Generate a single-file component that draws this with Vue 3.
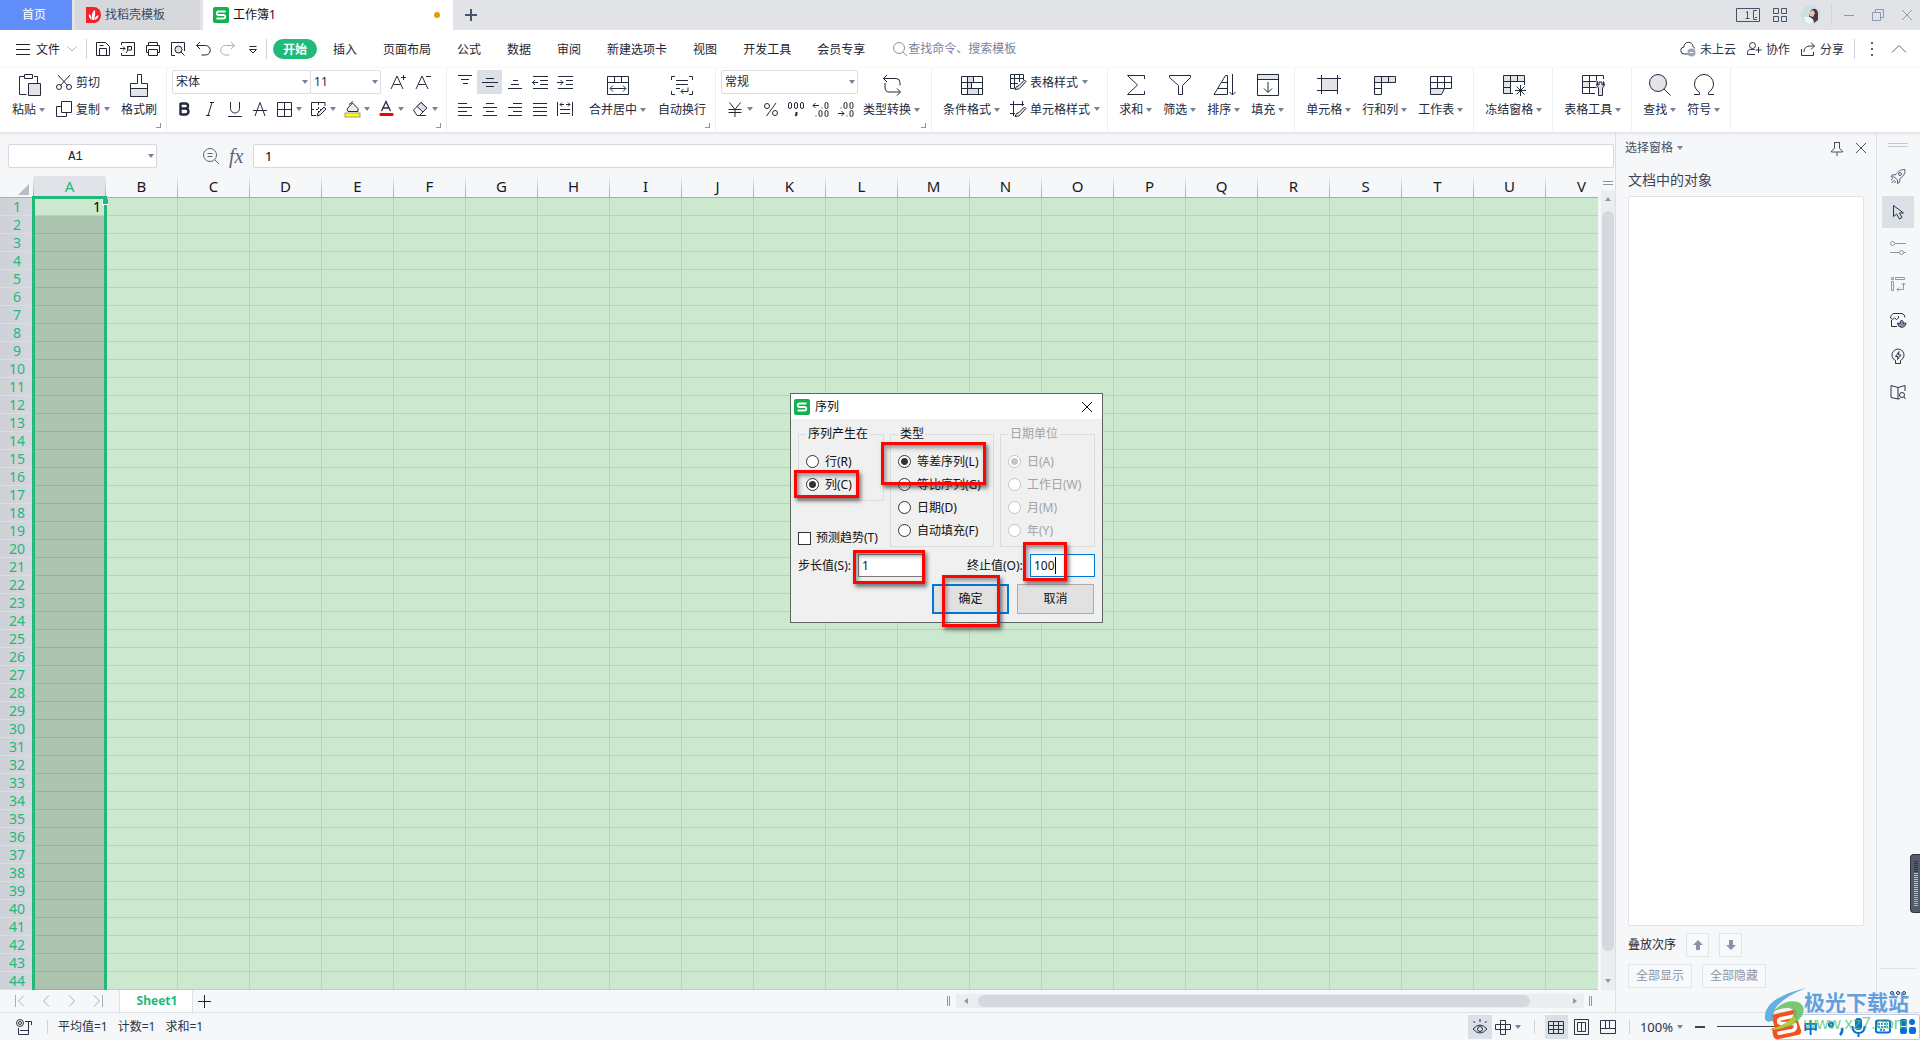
<script setup>
import { h } from 'vue'

const shapes = {
  menu: '<path d="M1 3.500h14M1 8.500h14M1 13.500h14"/>',
  chevDown: '<path d="M3.500 5.500l4.500 4.500 4.500-4.500"/>',
  chevUp: '<path d="M1 11.500l7-7 7 7"/>',
  save: '<path d="M1.500 1.500h9l4 4v9h-13zM4.500 14.500v-7h7v7M4.500 4.500h4"/>',
  exportPdf: '<path d="M1.500 4V1.500h13v13h-13V12M0 7.500h5M3 5.500l2 2-2 2M7.500 5.500h4v3.500h-4zM8 5c0 4-1 6-2 7"/>',
  print: '<path d="M3.500 4.500v-3h9v3M3.500 11.500h-2v-7h13v7h-2M3.500 8.500h9v6h-9z"/>',
  preview: '<path d="M5 14.500H1.500v-13h13V10"/><circle cx="8.500" cy="8.500" r="3.500" fill="#e3e4e8"/><path d="M11 11l3.500 3.500"/>',
  undo: '<path d="M1.500 4.500h9a4 4 0 0 1 0 9.500h-4M5 1L1.500 4.500 5 8"/>',
  redo: '<path d="M14.500 4.500h-9a4 4 0 0 0 0 9.500h4M11 1l3.500 3.500L11 8"/>',
  more: '<path d="M4.500 5.500h7M4.500 8.500h7l-3.500 3.500z"/>',
  search: '<circle cx="7" cy="7" r="5.500"/><path d="M11 11l4 4"/>',
  zoomOut: '<circle cx="7" cy="7" r="6.500"/><path d="M11.500 11.500l4.500 4.500M4.500 5.500h5M4.500 8.500h5"/>',
  cloud: '<path d="M8 13H4.500a3.500 3.500 0 0 1-.500-7 4.500 4.500 0 0 1 9-.500c1 .500 1.500 1 1.500 2"/><circle cx="11.500" cy="11.500" r="4" fill="#9aa3b6" stroke="none"/><path d="M9.500 11.500h4" stroke="#fff"/>',
  team: '<circle cx="6.500" cy="4.500" r="3"/><path d="M9 13.500H1.500v-2c0-2 1-3 3-3h4M12.500 6v6M9.500 9h6"/>',
  share: '<path d="M1.500 8v6.500h12V11M4 11c0-4 2-6 7-6h3M11 1.500L14.500 5 11 8.500"/>',
  paste: '<path d="M7 3.500H2.500v18h7M17 3.500h3.500V10M7.500 1.500h8v4h-8z"/><path fill="#e3e4e8" d="M11.500 10.500h12v12h-12z"/>',
  cut: '<path d="M2 1l10 11M14 1L4 12"/><circle cx="3" cy="13" r="2.500"/><circle cx="13" cy="13" r="2.500"/>',
  copy: '<path d="M5 5.500H.500v10h10V12M5.500 .500h10v11h-10z"/>',
  brush: '<path d="M10.500 1.500h4v9h6v13h-17v-13h7z"/><path d="M3.500 15.500h17v8h-17z" fill="#e3e4e8"/>',
  fontUp: '<path d="M1 15L7 2l6 13M3.500 10.500h7M11 3.500h5M13.500 1v5"/>',
  fontDown: '<path d="M1 15L7 2l6 13M3.500 10.500h7M11 2.500h5"/>',
  bold: '<path d="M3.500 2v12M3.500 2.500h5a2.500 2.500 0 0 1 0 5h-5M8.500 7.500a3 3 0 0 1 0 6h-5" stroke-width="2.400"/>',
  italic: '<path d="M8 1.500h4M4 14.500h4M10 1.500l-4 13"/>',
  underline: '<path d="M3.500 1v6.500a4.500 4.500 0 0 0 9 0V1M1 15.500h14"/>',
  strike: '<path d="M3 15L8 1.500 13 15M1 9.500h14"/>',
  border: '<path d="M1.500 1.500h14v14h-14zM8.500 1.500v14M1.500 8.500h14"/>',
  borderDraw: '<path d="M15 5V1.500H1.500v13H6"/><path d="M2 8.500h9M8.500 2v9" stroke-dasharray="2 2"/><path fill="#e3e4e8" d="M7 15l1-3 6-6 2 2-6 6z"/>',
  fill: '<path d="M3 8l5.500-6L14 7.500v3H4zM5 3.500l4-3" fill="#eceef0"/><rect x="1" y="12" width="15" height="4" fill="#ff0" stroke="#999"/>',
  fontColor: '<path d="M3.500 10L8 .500 12.500 10M5 7h6" stroke-width="1.300"/><rect x="1.500" y="12" width="14" height="3" rx="1" fill="#f00" stroke="none"/>',
  eraser: '<path d="M1.500 9L9 1.500l6 5.500-7.500 7.500H5z" fill="#fff"/><path d="M5 5.500L9 1.500l6 5.500-4 4z" fill="#dcdfe5"/><path d="M5 14.500h9"/>',
  alTop: '<path d="M1 1.500h14M4 5.500h8M6 9.500h5"/>',
  alMid: '<path d="M4 4.500h8M0 8.500h16M4 12.500h8"/>',
  alBot: '<path d="M6 6.500h5M4 10.500h8M1 14.500h14"/>',
  outdent: '<path d="M1 2.500h15M8 6.500h8M8 10.500h8M1 14.500h15M0 8.500h6M3 6L.500 8.500 3 11"/>',
  indent: '<path d="M1 2.500h15M9 6.500h7M9 10.500h7M1 14.500h15M0 8.500h6M3.500 6L6 8.500 3.500 11"/>',
  left: '<path d="M1 2.500h9M1 6.500h14M1 10.500h9M1 14.500h14"/>',
  center: '<path d="M4 2.500h8M1 6.500h14M4 10.500h8M1 14.500h14"/>',
  right: '<path d="M6 2.500h9M1 6.500h14M6 10.500h9M1 14.500h14"/>',
  justify: '<path d="M1 2.500h14M1 6.500h14M1 10.500h14M1 14.500h14"/>',
  distribute: '<path d="M.500 1v14M15.500 1v14M3 8.500h10M3 12.500h10M3 3.500h4M9 3.500h4M5 1.500L3 3.500l2 2M11 1.500l2 2-2 2"/>',
  merge: '<path d="M1.500 3.500h21v18h-21zM1.500 9.500h21M8.500 3.500v6M15.500 3.500v6M4.500 15.500h15M7 12.500l-3 3 3 3M17 12.500l3 3-3 3"/>',
  wrap: '<path d="M1.500 7V3.500H5M19 3.500h3.500V7M1.500 18v3.500H5M19 21.500h3.500V18M6 7.500h12M6 11.500h12M6 15.500h4M18 14.500v4h-7M13.500 16l-2.500 2.500 2.500 2.500"/>',
  yen: '<path d="M2.500 1.500L8 8.500l5.500-7M1.500 8.500h13M1.500 11.500h13M8 8.500V16"/>',
  percent: '<circle cx="4" cy="5" r="2.500"/><circle cx="12" cy="12" r="2.500"/><path d="M13 2L3.500 15"/>',
  thousand: '<rect x=".500" y="1.500" width="3" height="6" rx="1.500"/><rect x="6.500" y="1.500" width="3" height="6" rx="1.500"/><rect x="12.500" y="1.500" width="3" height="6" rx="1.500"/><path d="M8.500 11v2l-1 2" stroke-width="2"/>',
  decLess: '<path d="M0 4.500h6M2.500 2L0 4.500 2.500 7M9 6.500v1M3 14.500v1"/><rect x="12" y="1.500" width="3" height="6" rx="1.500"/><rect x="6" y="9.500" width="3" height="6" rx="1.500"/><rect x="12" y="9.500" width="3" height="6" rx="1.500"/>',
  decMore: '<path d="M0 12.500h6M3.500 10L6 12.500 3.500 15M9 14.500v1M3 6.500v1"/><rect x="12" y="9.500" width="3" height="6" rx="1.500"/><rect x="6" y="1.500" width="3" height="6" rx="1.500"/><rect x="12" y="1.500" width="3" height="6" rx="1.500"/>',
  convert: '<path d="M7 2L3.500 5.500 7 9M3.500 5.500H16q4 0 4 4v3M5 10v4q0 5 4 5h11M17 15.500l3.500 3.500-3.500 3.500"/>',
  condFormat: '<path fill="#dcdfe5" stroke="none" d="M7 4h6v6H7zM7 10h5v6H7zM7 16h12v6H7z"/><path d="M1.500 3.500h21v18h-21zM1.500 9.500h21M1.500 15.500h21M7.500 3.500v18M13.500 3.500v6M11.500 9.500v6M18.500 15.500v6"/>',
  tableStyle: '<path d="M4 14.500H.500V.500h13V6M.500 4.500h13M.500 9.500H8M4.500 .500v14M9.500 .500V8"/><path fill="#e3e4e8" d="M5 15.500q1-4 4-4l5.500-5.500 1.500 1.500-5.500 6q-1 2-5.500 2z"/>',
  cellStyle: '<path d="M0 3.500h14M3.500 0v15M0 12.500h5M12.500 0v5"/><path fill="#e3e4e8" d="M5 15.500q1-4 4-4l5.500-5.500 1.500 1.500-5.500 6q-1 2-5.500 2z"/>',
  sum: '<path d="M20.500 6V2.500h-17L13.500 12l-10 9.500h17V18"/>',
  filter: '<path d="M1.500 2.500h21v2l-8 8v9h-4v-9l-9-8z"/>',
  sort: '<path d="M15.500 2.500h-2l-11.500 19h13.500zM10 9.500h5M6 15.500h9M20.500 1v21M17.500 19l3 3 3-3"/>',
  down: '<path fill="#e3e4e8" d="M1.500 1.500h21v5h-21z"/><path d="M1.500 1.500h21v21h-21zM12 9v10M8 15.500l4 4 4-4"/>',
  cell: '<path fill="#e3e4e8" d="M4.500 5.500h16v12h-16z"/><path d="M0 5.500h24M0 17.500h19M4.500 2v19M20.500 2v14M20.500 17v4"/>',
  rowCol: '<path fill="#e3e4e8" d="M1.500 3.500h21v6h-21z"/><path d="M8.500 3.500v18h-7v-18M15.500 3.500v6M1.500 15.500h7"/>',
  sheet: '<path fill="#e3e4e8" d="M1.500 15.500h14l-3 6h-11z"/><path d="M1.500 3.500h21v12h-21zM1.500 9.500h21M8.500 3.500v12M15.500 3.500v12"/>',
  freeze: '<path fill="#e3e4e8" stroke="none" d="M1 2h22v6H8v13H1z"/><path d="M11 20.500H1.500v-18h21V12M1.500 8.500h21M1.500 14.500h7M8.500 2.500v18M15.500 2.500v6M18.500 12v11M13 17.500h11M14.500 13.500l8 8M22.500 13.500l-8 8"/>',
  tools: '<path fill="#e3e4e8" stroke="none" d="M1 9h7v6H1z"/><path d="M14 20.500H1.500v-18h21V6M1.500 8.500h14M1.500 14.500h14M8.500 2.500v18M15.500 2.500v5"/><path fill="#e3e4e8" d="M16.500 8.500q-2.500 4 1 6.500v7.500h4V15q3.500-2.500 1-6.500v3.500h-1.500V9h-3v3h-1.500z"/>',
  find: '<circle cx="10" cy="10" r="8.500" fill="#e3e4e8"/><path d="M16 16l6.500 6.500"/>',
  symbol: '<path d="M2 21.500h5.500v-2C4 17 2.500 14 2.500 11a9.500 9.500 0 0 1 19 0c0 3-1.500 6-5 8.500v2H22"/>',
  plus: '<path d="M8.500 2v13M2 8.500h13"/>',
  first: '<path d="M3.500 2v12M12 2.500L6.500 8l5.500 5.500"/>',
  prev: '<path d="M11 2.500L5.500 8l5.500 5.500"/>',
  next: '<path d="M5 2.500L10.500 8 5 13.500"/>',
  last: '<path d="M12.500 2v12M4 2.500L9.500 8 4 13.500"/>',
  macro: '<circle cx="4" cy="4" r="3.500"/><circle cx="4" cy="4" r="1.500"/><path d="M9 2.500h6.500V6M12.500 3v9M2.500 9v6.500h10v-4H4"/>',
  eye: '<path d="M1 10q7-8 14 0-7 8-14 0zM3 4L1.500 2M8 3V0M13 4l1.500-2"/><circle cx="8" cy="10" r="2.500"/>',
  cross: '<path d="M5.500 1.500h5v4h5v5h-5v5h-5v-5h-5v-5h5zM5.500 5.500h5v5h-5z"/>',
  gridView: '<path d="M.500 2.500h15v12h-15zM.500 6.500h15M.500 10.500h15M5.500 2.500v12M10.500 2.500v12"/>',
  pageView: '<path d="M.500 .500h14v15h-14zM3.500 3.500h4v9h-4zM7.500 3.500h4v9h-4z"/>',
  breakView: '<path d="M.500 1.500h15v13h-15zM.500 9.500h9M5.500 1.500v8M9.500 1.500v8h6"/>',
  pin: '<path d="M5 2.500h6M5.500 2.500v6l-3 2.500v1h11v-1l-3-2.500v-6M8 12v4"/>',
  close: '<path d="M3 3l10 10M13 3L3 13"/>',
  up: '<path fill="#8a93a8" stroke="none" d="M8 3l5 5H10v5H6V8H3z"/>',
  dn: '<path fill="#8a93a8" stroke="none" d="M8 13l5-5H10V3H6v5H3z"/>',
  rocket: '<path d="M15 1.500c-5 0-7 2-9 5l-4 .500-1 2 3.500 0 3 3 0 3.500 2-1 .500-4c3-2 5-4 5-9zM1 12l2-1.500M1.500 15l3-3M4.500 15l1.500-2"/><circle cx="10" cy="6" r="1.500"/>',
  pointer: '<path d="M3.500 1.500v11l3-2.500 3 5 2.500-1.500-2.500-4.500h4z"/>',
  sliders: '<circle cx="2.500" cy="3.500" r="2"/><path d="M5 3.500h11M0 12.500h9M14 12.500h2"/><circle cx="11.500" cy="12.500" r="2"/>',
  resize: '<path d="M1.500 1.500h2v2h-2zM5.500 1.500h9v2h-9zM1.500 5.500h2v9h-2zM7 13.500h6.500V7M9 11.500l-2 2 2 2M11.500 9l2-2 2 2"/>',
  store: '<path d="M7 14.500H1.500V8M3 1.500h9q3 1 3 4M3 1.500q-2.500 2-2.500 4.500 2 3 4 0 2 3 4 0v-2"/><path fill="#8a93a8" d="M11.500 15.500q-4-1-4-4.500 2 0 2.500 1 0-3 1.500-4 2 1 2 4 .500-1 2.500-1 0 3.500-4.500 4.500z"/>',
  bulb: '<path d="M5.500 12.500a6 6 0 1 1 5 0v3h-5zM9 3.500L5.500 8.500h2.500l-.500 3L11 7H8.500z"/>',
  reader: '<path d="M8 3.500L1 1.500v12l7 1.500zM8 3.500l7-2V7M8 15l2-.500"/><circle cx="12" cy="11" r="2.500"/><path d="M14 13l1.500 2"/>',
  wins: '<path d="M1.500 1.500h5v5h-5zM9.500 1.500h5v5h-5zM1.500 9.500h5v5h-5zM9.500 9.500h5v5h-5z"/>',
  min: '<path d="M3 8.500h10"/>',
  restore: '<path d="M5.500 5V2.500h8v8H11M2.500 5.500h8v8h-8z"/>',
}

const Icon = (p) =>
  h('svg', {
    class: 'icon',
    width: p.size || 16,
    height: p.size || 16,
    viewBox: `0 0 ${p.size || 16} ${p.size || 16}`,
    'aria-hidden': 'true',
    innerHTML: shapes[p.name],
  })
Icon.props = ['name', 'size']

const quick = ['save', 'exportPdf', 'print', 'preview', 'undo', 'redo', 'more']
const menus = ['插入', '页面布局', '公式', '数据', '审阅', '新建选项卡', '视图', '开发工具', '会员专享']
const fontTools = ['bold', 'italic', 'underline', 'strike']
const fontDrops = ['border', 'borderDraw', 'fill', 'fontColor', 'eraser']
const alignTop = ['alTop', 'alMid', 'alBot', 'outdent', 'indent']
const alignBottom = ['left', 'center', 'right', 'justify', 'distribute']
const numberTools = ['percent', 'thousand', 'decLess', 'decMore']
const tailGroups = [
  [['sum', '求和'], ['filter', '筛选'], ['sort', '排序'], ['down', '填充']],
  [['cell', '单元格'], ['rowCol', '行和列'], ['sheet', '工作表']],
  [['freeze', '冻结窗格']],
  [['tools', '表格工具']],
  [['find', '查找'], ['symbol', '符号']],
]
const columns = 'ABCDEFGHIJKLMNOPQRSTUV'.split('')
const rows = 44
const railTools = ['rocket', 'pointer', 'sliders', 'resize', 'store', 'bulb', 'reader']
const meter = Array.from({ length: 23 }, (_, i) => (i < 6 ? '#32363f' : i < 11 ? '#e6c45c' : i < 16 ? '#b9d77a' : '#6fd3b6'))
</script>

<template>
  <div class="app">
    <header class="titlebar">
      <button class="tab home">首页</button>
      <button class="tab docer">
        <svg width="15" height="16" viewBox="0 0 15 16" aria-hidden="true"><path fill="#f5222d" d="M0 0h8a7 8 0 0 1 0 16H0z" /><path fill="#fff" d="M6.500 13C5 9 6 5 9 3c.500 3 0 6-1 10zM5.500 13C3 11 2.500 9 3 7c2 1 2.500 3 2.500 6zM8.500 13c.500-3 1.500-4 4-5 0 3-1.500 4-4 5z" /></svg>
        <span>找稻壳模板</span>
      </button>
      <button class="tab active">
        <svg width="16" height="16" viewBox="0 0 16 16" aria-hidden="true"><rect width="16" height="16" rx="2" fill="#13b04f" /><path d="M12.500 4.500h-7a1.700 1.700 0 0 0 0 3.500h5a1.700 1.700 0 0 1 0 3.500h-7" fill="none" stroke="#fff" stroke-width="1.800" /></svg>
        <span>工作簿1</span>
        <span class="unsaved"></span>
      </button>
      <button class="newtab" aria-label="新建"><svg width="12" height="12" viewBox="0 0 12 12"><path d="M6 0v12M0 6h12" stroke="#46526b" stroke-width="2" /></svg></button>
      <div class="winctl">
        <svg width="24" height="14" viewBox="0 0 24 14" fill="none" stroke="#46526b" aria-hidden="true"><path d="M.500 .500h23v13H.500zM10 4.500l1.500-1v7M9.500 10.500h4M21 2.500h-3.500v9H21M19 9.500h2" /></svg>
        <Icon name="wins" class="wins" />
        <svg class="avatar" width="20" height="20" viewBox="0 0 20 20" aria-hidden="true"><circle cx="10" cy="10" r="10" fill="#cddfe2" /><path d="M9 8c1-5 7-6 8 0v7l-4 3-1-4-4-2z" fill="#4a3a40" /><path d="M9 7l3-2 2 3-2 4-3-1z" fill="#e7c3b5" /><path d="M3 12l6 0 4 5-5 2-4-3z" fill="#eef6f7" /></svg>
        <i class="vline"></i>
        <Icon name="min" /><Icon name="restore" /><Icon name="close" />
      </div>
    </header>

    <nav class="menubar">
      <button class="file"><Icon name="menu" /><span>文件</span><Icon name="chevDown" class="dim" /></button>
      <i class="vline"></i>
      <div class="quick">
        <button v-for="q in quick" :key="q" :aria-label="q" :class="{ dim: q === 'redo' }"><Icon :name="q" /></button>
      </div>
      <i class="vline"></i>
      <button class="pill">开始</button>
      <div class="menus"><button v-for="m in menus" :key="m">{{ m }}</button></div>
      <label class="finder"><Icon name="search" /><input type="text" placeholder="查找命令、搜索模板" aria-label="查找命令" /></label>
      <div class="account">
        <button><Icon name="cloud" /><span>未上云</span></button>
        <button><Icon name="team" /><span>协作</span></button>
        <button><Icon name="share" /><span>分享</span></button>
        <i class="vline"></i>
        <svg width="2" height="14" viewBox="0 0 2 14" aria-hidden="true"><path d="M0 1h2M0 7h2M0 13h2" stroke="#5b6478" stroke-width="2" /></svg>
        <Icon name="chevUp" />
      </div>
    </nav>

    <div class="ribbon">
      <section class="group clip">
        <button class="big"><Icon name="paste" size="24" /><span>粘贴<i class="caret"></i></span></button>
        <div class="stack">
          <button class="mini"><Icon name="cut" /><span>剪切</span></button>
          <button class="mini"><Icon name="copy" /><span>复制</span><i class="caret"></i></button>
        </div>
        <button class="big"><Icon name="brush" size="24" /><span>格式刷</span></button>
        <i class="launch"></i>
      </section>
      <section class="group tight">
        <div class="stack">
          <div class="line">
            <div class="picker font"><select aria-label="字体"><option>宋体</option></select><i class="caret"></i></div>
            <div class="picker size"><select aria-label="字号"><option>11</option></select><i class="caret"></i></div>
            <button class="sq lead" aria-label="增大字号"><Icon name="fontUp" /></button>
            <button class="sq" aria-label="减小字号"><Icon name="fontDown" /></button>
          </div>
          <div class="line">
            <button v-for="t in fontTools" :key="t" class="sq" :aria-label="t"><Icon :name="t" /></button>
            <button v-for="t in fontDrops" :key="t" class="sq drop" :aria-label="t"><Icon :name="t" /><i class="caret"></i></button>
          </div>
        </div>
        <i class="launch"></i>
      </section>
      <section class="group align">
        <div class="stack">
          <div class="line"><button v-for="t in alignTop" :key="t" class="sq" :class="{ on: t === 'alMid' }" :aria-label="t"><Icon :name="t" /></button></div>
          <div class="line"><button v-for="t in alignBottom" :key="t" class="sq" :aria-label="t"><Icon :name="t" /></button></div>
        </div>
        <button class="big"><Icon name="merge" size="24" /><span>合并居中<i class="caret"></i></span></button>
        <button class="big"><Icon name="wrap" size="24" /><span>自动换行</span></button>
        <i class="launch"></i>
      </section>
      <section class="group number">
        <div class="stack">
          <div class="picker format"><select aria-label="数字格式"><option>常规</option></select><i class="caret"></i></div>
          <div class="line">
            <button class="sq drop" aria-label="货币"><Icon name="yen" /><i class="caret"></i></button>
            <button v-for="t in numberTools" :key="t" class="sq" :aria-label="t"><Icon :name="t" /></button>
          </div>
        </div>
        <button class="big"><Icon name="convert" size="24" /><span>类型转换<i class="caret"></i></span></button>
        <i class="launch"></i>
      </section>
      <section class="group styles">
        <button class="big"><Icon name="condFormat" size="24" /><span>条件格式<i class="caret"></i></span></button>
        <div class="stack">
          <button class="mini"><Icon name="tableStyle" /><span>表格样式</span><i class="caret"></i></button>
          <button class="mini"><Icon name="cellStyle" /><span>单元格样式</span><i class="caret"></i></button>
        </div>
      </section>
      <section v-for="(g, i) in tailGroups" :key="i" class="group">
        <button v-for="[icon, label] in g" :key="icon" class="big"><Icon :name="icon" size="24" /><span>{{ label }}<i class="caret"></i></span></button>
      </section>
    </div>

    <div class="work">
      <main class="book">
        <div class="formula">
          <div class="namebox"><input type="text" value="A1" aria-label="名称框" /><i class="caret"></i></div>
          <Icon name="zoomOut" />
          <span class="fx">fx</span>
          <input class="entry" type="text" value="1" aria-label="编辑栏" />
        </div>
        <div class="canvas">
          <div class="sheet">
            <table>
              <thead>
                <tr>
                  <th class="corner"><svg width="11" height="11" viewBox="0 0 11 11" aria-hidden="true"><path d="M11 0v11H0z" fill="#b9bcc2" /></svg></th>
                  <th v-for="c in columns" :key="c" :class="{ sel: c === 'A' }" scope="col">{{ c }}</th>
                </tr>
              </thead>
              <tbody>
                <tr v-for="r in rows" :key="r">
                  <th scope="row">{{ r }}</th>
                  <td v-for="c in columns" :key="c" :class="{ sel: c === 'A' && r > 1 }">{{ c === 'A' && r === 1 ? '1' : '' }}</td>
                </tr>
              </tbody>
            </table>
            <div class="selection"><i></i></div>
          </div>
          <div class="vscroll">
            <i class="grip"></i>
            <div class="track"><i class="tri up"></i><i class="thumb"></i><i class="tri dn"></i></div>
          </div>
        </div>
        <div class="sheetbar">
          <div class="navs">
            <button v-for="n in ['first', 'prev', 'next', 'last']" :key="n" :aria-label="n"><Icon :name="n" /></button>
          </div>
          <button class="sheettab">Sheet1</button>
          <button class="add" aria-label="新建工作表"><Icon name="plus" /></button>
          <div class="hscroll">
            <i class="split"></i>
            <div class="htrack"><i class="tri lf"></i><i class="hthumb"></i><i class="tri rt"></i></div>
            <i class="split"></i>
          </div>
        </div>
      </main>

      <aside class="pane">
        <div class="panehead">选择窗格<i class="caret"></i><button class="push" aria-label="固定"><Icon name="pin" /></button><button aria-label="关闭"><Icon name="close" /></button></div>
        <h2>文档中的对象</h2>
        <div class="objects"></div>
        <div class="order">叠放次序<button aria-label="上移"><Icon name="up" /></button><button aria-label="下移"><Icon name="dn" /></button></div>
        <div class="showhide"><button>全部显示</button><button>全部隐藏</button></div>
      </aside>

      <aside class="rail">
        <i class="grip"></i>
        <button v-for="t in railTools" :key="t" :aria-label="t" :class="t"><Icon :name="t" /></button>
        <svg class="ellipsis" width="16" height="4" viewBox="0 0 16 4" fill="none" stroke="#2b3346" aria-hidden="true"><circle cx="2" cy="2" r="1.500" /><circle cx="8" cy="2" r="1.500" /><circle cx="14" cy="2" r="1.500" /></svg>
      </aside>
    </div>

    <footer class="status">
      <Icon name="macro" />
      <i class="vline"></i>
      <span>平均值=1</span><span>计数=1</span><span>求和=1</span>
      <div class="views">
        <button class="on eyebtn" aria-label="护眼模式"><Icon name="eye" /></button>
        <button class="crossbtn" aria-label="阅读模式"><Icon name="cross" /><i class="caret"></i></button>
        <i class="vline"></i>
        <button class="on" aria-label="普通视图"><Icon name="gridView" /></button>
        <button aria-label="页面视图"><Icon name="pageView" /></button>
        <button aria-label="分页预览"><Icon name="breakView" /></button>
        <i class="vline"></i>
        <button class="zoom">100%<i class="caret"></i></button>
        <i class="minus"></i>
        <input type="range" aria-label="缩放" />
      </div>
    </footer>

    <div class="dialog" role="dialog" aria-label="序列">
      <div class="dlghead">
        <svg width="16" height="16" viewBox="0 0 16 16" aria-hidden="true"><rect width="16" height="16" rx="2" fill="#13b04f" /><path d="M12.500 4.500h-7a1.700 1.700 0 0 0 0 3.500h5a1.700 1.700 0 0 1 0 3.500h-7" fill="none" stroke="#fff" stroke-width="1.800" /></svg>
        序列
        <button aria-label="关闭"><Icon name="close" /></button>
      </div>
      <form class="dlgbody" @submit.prevent>
        <div class="options">
          <div class="firstcol">
            <fieldset>
              <legend>序列产生在</legend>
              <label><input type="radio" name="dir" />行(R)</label>
              <label><input type="radio" name="dir" checked />列(C)</label>
            </fieldset>
            <label class="trend"><input type="checkbox" />预测趋势(T)</label>
          </div>
          <fieldset>
            <legend>类型</legend>
            <label><input type="radio" name="kind" checked />等差序列(L)</label>
            <label><input type="radio" name="kind" />等比序列(G)</label>
            <label><input type="radio" name="kind" />日期(D)</label>
            <label><input type="radio" name="kind" />自动填充(F)</label>
          </fieldset>
          <fieldset disabled>
            <legend>日期单位</legend>
            <label><input type="radio" name="unit" checked />日(A)</label>
            <label><input type="radio" name="unit" />工作日(W)</label>
            <label><input type="radio" name="unit" />月(M)</label>
            <label><input type="radio" name="unit" />年(Y)</label>
          </fieldset>
        </div>
        <div class="values">
          <label for="step">步长值(S):</label><input id="step" type="text" value="1" />
          <label for="stop" class="stoplabel">终止值(O):</label>
          <div class="stop"><input id="stop" type="text" value="100" /><i class="cursor"></i></div>
        </div>
        <div class="actions"><button class="ok">确定</button><button type="button">取消</button></div>
      </form>
      <i class="mark m1"></i><i class="mark m2"></i><i class="mark m3"></i><i class="mark m4"></i><i class="mark m5"></i>
    </div>

    <div class="meter"><i v-for="(c, i) in meter" :key="i" :style="{ background: c }"></i></div>

    <div class="ime">
      <svg width="130" height="24" viewBox="0 0 130 24" fill="none" stroke="#0a6fd8" aria-hidden="true">
        <path d="M40 7.500a2 2 0 1 0 .1 0M51 13q1 4-2 7" stroke-width="2.500" />
        <rect x="64" y="3" width="7" height="12" rx="3" fill="#0a6fd8" stroke="none" /><path d="M61.500 11q0 7 6 7t6-7M67.500 18v4" stroke-width="2" />
        <rect x="85" y="5.500" width="14" height="12" rx="2" stroke-width="2" /><path d="M87 9h10M87 12h10M89 15h6" stroke-width="1.500" stroke-dasharray="2 1" />
        <g fill="#0a6fd8" stroke="none"><rect x="109" y="4" width="7" height="7" rx="2" /><rect x="118" y="4" width="6" height="6" rx="3" /><rect x="109" y="12" width="7" height="7" rx="2" /><rect x="118" y="12" width="7" height="7" rx="2" /></g>
      </svg>
      <span>中</span>
    </div>
    <div class="brand">
      <svg width="44" height="52" viewBox="0 0 44 52" aria-hidden="true">
        <path d="M7 27l22-5q4-1 4 3l-1 2 5 15q1 4-3 5l-19 4q-5 1-6-4l-1-7 3 0z" fill="#f4511e" />
        <path d="M30 28l-14 3q-2 1-1 3.500l1.500 1 12 0q3 0 3 3t-3 4l-15 3" fill="none" stroke="#fff" stroke-width="3.500" />
        <path d="M1 31Q-1 10 42 0 22 8 13 18 8 24 10 32 3 36 1 31z" fill="#4ea3e0" opacity=".85" />
        <path d="M8 25Q20 10 34 14q9 4 4 14-8 13-33 14 18-5 24-14 3-8-6-8-8 0-15 5z" fill="#63bf62" opacity=".85" />
        <path d="M5 42q18-5 24-14l4 3Q23 42 5 42z" fill="#c5ca2b" opacity=".8" />
      </svg>
      <div><strong>极光下载站</strong><b>www.xz7.com</b></div>
    </div>
  </div>
</template>

<style>
body {
  margin: 0;
  overflow: hidden;
}
</style>

<style scoped>
* {
  box-sizing: border-box;
}
.app {
  position: relative;
  display: flex;
  flex-direction: column;
  height: 100vh;
  overflow: hidden;
  background: #f5f7f9;
  color: #1f2533;
  font: 12px/16px "Noto Sans", "Noto Sans CJK SC", sans-serif;
}
button,
input,
select {
  margin: 0;
  padding: 0;
  border: 0;
  background: none;
  color: inherit;
  font: inherit;
  outline: 0;
  white-space: nowrap;
}
button {
  display: flex;
  align-items: center;
  justify-content: center;
}
.icon {
  flex: none;
  display: block;
  fill: none;
  stroke: currentColor;
  overflow: visible;
}
.caret {
  flex: none;
  border: 3px solid transparent;
  border-top: 4px solid #78829a;
  border-bottom: 0;
}
.vline {
  flex: none;
  width: 1px;
  height: 20px;
  background: #cfd2d8;
}

.titlebar {
  display: flex;
  flex: none;
  height: 30px;
  background: #e1e3e7;
}
.tab {
  height: 30px;
  gap: 4px;
  justify-content: flex-start;
}
.home {
  width: 72px;
  margin-right: 3px;
  padding-right: 4px;
  justify-content: center;
  background: #628efa;
  color: #fff;
}
.docer {
  width: 125px;
  margin-right: 3px;
  padding-left: 11px;
  background: #d7d8dc;
  color: #424a5c;
}
.active {
  width: 250px;
  padding: 0 13px 0 10px;
  background: #fff;
  color: #111;
}
.unsaved {
  width: 6px;
  height: 6px;
  margin-left: auto;
  border-radius: 3px;
  background: #e69b00;
}
.newtab {
  width: 36px;
}
.winctl {
  display: flex;
  align-items: center;
  margin-left: auto;
  padding-right: 5px;
  color: #8b99b5;
}
.wins {
  margin: 0 15px 0 12px;
  color: #46526b;
}
.avatar {
  margin: 0 10px 0 -2px;
}
.winctl .vline {
  margin-right: 9px;
}
.winctl .vline ~ .icon + .icon {
  margin-left: 13px;
}

.menubar {
  display: flex;
  flex: none;
  align-items: center;
  height: 38px;
  background: #fff;
}
.menubar span,
.mini span {
  padding-top: 2px;
}
.file {
  gap: 5px;
  padding: 0 6px 0 15px;
}
.file .dim {
  margin-left: -1px;
}
.dim {
  color: #a9adb6;
}
.quick {
  display: flex;
  gap: 9px;
  padding: 0 5px 0 8px;
}
.pill {
  width: 44px;
  height: 20px;
  margin: 0 16px 0 6px;
  padding-top: 1px;
  border-radius: 10px;
  background: #20ba7b;
  color: #fff;
  font-weight: bold;
}
.menus {
  display: flex;
  gap: 26px;
  margin-right: 27px;
  padding-top: 2px;
}
.finder {
  display: flex;
  align-items: center;
  color: #8b94a8;
}
.finder input {
  width: 130px;
}
.finder input::placeholder {
  color: #7a849c;
}
.account {
  display: flex;
  align-items: center;
  margin-left: auto;
  padding-right: 13px;
  color: #5b6478;
}
.account button {
  gap: 4px;
  margin-right: 10px;
  color: #2b3346;
}
.account svg + .icon {
  margin-left: 18px;
}
.account .vline {
  margin-right: 16px;
}

.ribbon {
  position: relative;
  display: flex;
  flex: none;
  height: 64px;
  padding-bottom: 2px;
  background: #fff;
  box-shadow: 0 1px 3px #d5d7db;
  color: #222a3b;
}
.group {
  position: relative;
  display: flex;
  flex: none;
  gap: 11px;
  padding: 0 10px 0 11px;
  border-right: 1px solid #eceef0;
}
.clip {
  gap: 11px;
  padding: 0 9px 0 12px;
}
.tight {
  padding: 0 4px 0 5px;
}
.align {
  gap: 12px;
  padding: 0 9px 0 5px;
}
.number {
  gap: 5px;
  padding: 0 11px 0 5px;
}
.styles {
  gap: 10px;
  padding: 0 7px 0 11px;
}
.big {
  flex-direction: column;
  justify-content: flex-start;
  gap: 5px;
  padding-top: 5px;
}
.big span {
  display: flex;
  align-items: center;
  gap: 3px;
}
.stack {
  display: flex;
  flex-direction: column;
  gap: 3px;
  padding-top: 2px;
}
.mini {
  height: 24px;
  gap: 4px;
  justify-content: flex-start;
}
.line {
  display: flex;
}
.sq {
  width: 25px;
  height: 24px;
}
.sq.on,
.views .on {
  background: #dae0e6;
}
.drop {
  width: 34px;
  gap: 4px;
}
.lead {
  margin-left: 4px;
}
.number .drop {
  width: 37px;
}
.picker {
  position: relative;
  display: flex;
  height: 24px;
}
.picker select {
  width: 100%;
  height: 24px;
  padding-left: 3px;
  border: 1px solid #dcdee3;
  border-radius: 2px;
  background: #fff;
  appearance: none;
}
.picker .caret,
.namebox .caret {
  position: absolute;
  right: 3px;
  top: 10px;
}
.font {
  width: 139px;
}
.size {
  width: 71px;
  margin-left: -1px;
}
.format {
  width: 137px;
}
.launch {
  position: absolute;
  right: 5px;
  bottom: 2px;
  width: 5px;
  height: 5px;
  border: solid #8b94a8;
  border-width: 0 1px 1px 0;
}

.work {
  display: flex;
  flex: 1;
  min-height: 0;
}
.book {
  display: flex;
  flex: 1;
  flex-direction: column;
  min-width: 0;
}
.formula {
  display: flex;
  flex: none;
  align-items: center;
  height: 44px;
  padding: 4px 1px 0 8px;
  color: #5b6478;
}
.namebox {
  position: relative;
  width: 149px;
  margin-right: 46px;
}
.namebox input {
  width: 100%;
  height: 24px;
  padding: 2px 14px 0 0;
  border: 1px solid #d5d8de;
  border-radius: 2px;
  background: #fff;
  color: #222;
  font-family: "Liberation Mono", monospace;
  text-align: center;
}
.fx {
  width: 34px;
  padding-left: 10px;
  font: italic 20px/20px "Liberation Serif", serif;
}
.entry {
  flex: 1;
  height: 24px;
  padding-left: 11px;
  border: 1px solid #d5d8de;
  border-radius: 2px;
  background: #fff;
  color: #000;
  font-size: 13px;
}
.canvas {
  display: flex;
  flex: 1;
  min-height: 0;
}
.sheet {
  position: relative;
  flex: 1;
  min-width: 0;
  overflow: hidden;
}
table {
  width: 1618px;
  border-spacing: 0;
  table-layout: fixed;
}
th,
td {
  height: 18px;
  padding: 0;
  font-size: 14px;
  font-weight: normal;
  line-height: 17px;
}
thead th {
  width: 72px;
  height: 22px;
  border-right: 1px solid #b9becb;
  border-bottom: 1px solid #a6abbd;
  border-image: linear-gradient(#f5f7f9, #a6abbd 90%) 1;
  font-size: 15px;
  line-height: 21px;
  color: #16181d;
}
thead .corner {
  width: 34px;
  border-right-color: transparent;
}
.corner svg {
  display: block;
  margin: 5px 0 0 18px;
}
thead th.sel {
  background: #e1e3e8;
  color: #20ba7b;
}
tbody th {
  background: linear-gradient(90deg, #cdd0d7, #d5d8df);
  border-bottom: 1px solid #dadde3;
  color: #20ba7b;
}
td {
  border: solid #c3c9d3;
  border-width: 0 1px 1px 0;
  background: #cce8cf;
  color: #000;
  padding-right: 4px;
  text-align: right;
}
td.sel {
  background: #acc4af;
  border-color: #a2a7af;
}
.selection {
  position: absolute;
  top: 20px;
  bottom: -4px;
  left: 32px;
  width: 75px;
  border: 3px solid #20ba7b;
}
.selection i {
  position: absolute;
  top: 0;
  right: -4px;
  width: 6px;
  height: 6px;
  border: solid #fff;
  border-width: 0 0 1px 1px;
  background: #20ba7b;
}
.vscroll {
  display: flex;
  flex: none;
  flex-direction: column;
  width: 17px;
  padding-left: 3px;
}
.grip {
  flex: none;
  align-self: center;
  width: 10px;
  height: 4px;
  margin: 5px 0;
  border: solid #8b94a8;
  border-width: 1px 0;
}
.track {
  display: flex;
  flex: 1;
  flex-direction: column;
  align-items: center;
  padding: 7px 1px;
  background: #ebedf1;
}
.thumb {
  flex: 1;
  width: 12px;
  margin: 10px 0 28px;
  border-radius: 6px;
  background: #d4d8df;
}
.tri {
  flex: none;
  border: 3px solid transparent;
}
.up {
  border-top: 0;
  border-bottom: 4px solid #8b99b5;
}
.dn {
  border-bottom: 0;
  border-top: 4px solid #8b99b5;
}
.lf {
  border-left: 0;
  border-right: 4px solid #8b99b5;
}
.rt {
  border-right: 0;
  border-left: 4px solid #8b99b5;
}
.sheetbar {
  display: flex;
  flex: none;
  align-items: center;
  height: 23px;
  border-bottom: 1px solid #dfe1e8;
}
.navs {
  display: flex;
  gap: 10px;
  width: 119px;
  padding-left: 12px;
  color: #a9adb6;
}
.sheettab {
  align-self: stretch;
  width: 74px;
  padding-left: 2px;
  border: 1px solid #dfe1e8;
  border-top: 0;
  border-bottom: 0;
  background: #fff;
  color: #20ba7b;
  font-weight: bold;
}
.add {
  margin-left: 3px;
}
.hscroll {
  display: flex;
  align-items: center;
  width: 42%;
  min-width: 0;
  margin-left: auto;
  padding-right: 23px;
  padding-left: 10px;
}
.split {
  width: 3px;
  height: 10px;
  border: solid #8b94a8;
  border-width: 0 1px;
}
.htrack {
  display: flex;
  flex: 1;
  align-items: center;
  height: 14px;
  margin: 0 5px 0 6px;
  padding: 0 7px 0 8px;
  background: #ebedf1;
}
.hthumb {
  flex: 1;
  height: 12px;
  margin: 0 43px 0 10px;
  border-radius: 6px;
  background: #d4d8df;
}

.pane {
  display: flex;
  flex: none;
  flex-direction: column;
  width: 261px;
  padding: 8px 12px 24px;
  border-left: 1px solid #dcdfe5;
  border-bottom: 1px solid #dfe1e8;
}
.panehead {
  display: flex;
  align-items: center;
  gap: 4px;
  height: 16px;
  margin-left: -3px;
  color: #464e62;
}
.panehead .push {
  margin: 0 4px 0 auto;
}
.panehead button:last-child {
  margin-right: -5px;
}
h2 {
  margin: 13px 0 5px;
  color: #3c4356;
  font-size: 14px;
  font-weight: normal;
  line-height: 22px;
}
.objects {
  flex: 1;
  border: 1px solid #dfe1e6;
  border-radius: 2px;
  background: #fff;
}
.order {
  display: flex;
  align-items: center;
  gap: 10px;
  margin: 7px 0;
}
.order button,
.showhide button {
  width: 23px;
  height: 24px;
  border: 1px solid #e2e5ea;
  background: #f8f9fb;
}
.showhide {
  display: flex;
  gap: 10px;
  color: #8e96a8;
}
.showhide button {
  width: 64px;
}
.rail {
  display: flex;
  flex: none;
  flex-direction: column;
  align-items: center;
  gap: 4px;
  width: 44px;
  padding-right: 1px;
  border-left: 1px solid #dcdfe5;
  border-bottom: 1px solid #dfe1e8;
  color: #2b3346;
}
.rail .grip {
  width: 20px;
  margin: 11px 0 9px;
  border-color: #c6c9d0;
}
.rail button {
  width: 32px;
  height: 32px;
}
.rail .pointer {
  background: #dae0e6;
}
.rail .rocket {
  color: #56617c;
}
.rail .sliders,
.rail .resize {
  color: #8e96a8;
}
.ellipsis {
  box-sizing: content-box;
  margin-top: auto;
  padding: 22px 11px 17px;
  border-top: 1px solid #dfe1e6;
}

.status {
  display: flex;
  flex: none;
  align-items: center;
  gap: 10px;
  height: 27px;
  padding-left: 16px;
  color: #2b3346;
}
.status > .vline {
  margin-left: 5px;
}
.status .vline {
  height: 14px;
}
.views {
  display: flex;
  align-items: center;
  margin-left: auto;
}
.views button {
  width: 23px;
  height: 24px;
  margin-right: 3px;
}
.views .eyebtn {
  width: 24px;
}
.views .crossbtn {
  width: auto;
  gap: 4px;
  margin-right: 7px;
}
.views .vline {
  margin: 0 10px 0 6px;
}
.views .zoom {
  width: auto;
  gap: 4px;
  margin-right: 12px;
  font-size: 13px;
}
.minus {
  width: 10px;
  height: 2px;
  background: #3a4459;
}
.views input {
  width: 203px;
  height: 1px;
  margin-left: 12px;
  background: #3a4459;
  appearance: none;
}
.views input::-webkit-slider-thumb {
  width: 1px;
  height: 1px;
  appearance: none;
}

.dialog {
  position: absolute;
  top: 393px;
  left: 790px;
  width: 313px;
  border: 1px solid #5d6762;
  background: #f0f0f0;
  color: #111;
}
.dlghead {
  display: flex;
  align-items: center;
  gap: 5px;
  height: 25px;
  padding: 0 7px 0 3px;
  background: #fff;
}
.dlghead button {
  margin-left: auto;
}
.dlgbody {
  padding: 6px 7px 8px;
}
.options {
  display: grid;
  grid-template-columns: 86px 104px 95px;
  gap: 6px;
}
.firstcol {
  display: flex;
  flex-direction: column;
  justify-content: space-between;
}
fieldset {
  min-width: 0;
  margin: 0;
  padding: 7px 0 4px 7px;
  border: 1px solid #dcdcdc;
}
fieldset:disabled {
  color: #a3a3a3;
}
legend {
  padding: 0 2px;
  line-height: 18px;
}
fieldset label,
.trend {
  display: flex;
  align-items: center;
  gap: 6px;
  height: 23px;
  white-space: nowrap;
}
.trend {
  gap: 5px;
  height: 18px;
}
input[type="radio"],
input[type="checkbox"] {
  flex: none;
  width: 13px;
  height: 13px;
  border: 1px solid #333;
  background: #fff;
  appearance: none;
}
input[type="radio"] {
  border-radius: 7px;
}
input[type="radio"]:checked {
  background: radial-gradient(circle, #333 3px, #fff 4px);
}
fieldset:disabled input {
  border-color: #c4c4c4;
}
fieldset:disabled input:checked {
  background: radial-gradient(circle, #c4c4c4 3px, #fff 4px);
}
.values {
  display: flex;
  align-items: center;
  margin-top: 7px;
}
.values > label:first-child {
  width: 60px;
}
.values input {
  width: 66px;
  height: 23px;
  padding-left: 3px;
  border: 1px solid #7a7a7a;
  background: #fff;
}
.stoplabel {
  margin-left: auto;
  width: 63px;
}
.stop {
  position: relative;
  display: flex;
}
.stop input {
  width: 65px;
  border-color: #0078d7;
}
.cursor {
  position: absolute;
  top: 3px;
  left: 25px;
  width: 1px;
  height: 17px;
  background: #000;
}
.actions {
  display: flex;
  justify-content: flex-end;
  gap: 8px;
  margin-top: 7px;
  padding-right: 1px;
}
.actions button {
  width: 77px;
  height: 30px;
  border: 1px solid #adadad;
  background: #e1e1e1;
}
.actions .ok {
  border: 2px solid #0078d7;
}
.mark {
  position: absolute;
  border: 3px solid #fb0505;
  box-shadow: 2px 3px 4px rgba(60, 60, 60, 0.7), inset 2px 3px 4px rgba(60, 60, 60, 0.5);
}
.m1 {
  top: 76px;
  left: 3px;
  width: 65px;
  height: 28px;
}
.m2 {
  top: 48px;
  left: 90px;
  width: 105px;
  height: 43px;
}
.m3 {
  top: 156px;
  left: 62px;
  width: 72px;
  height: 34px;
}
.m4 {
  top: 148px;
  left: 232px;
  width: 44px;
  height: 39px;
}
.m5 {
  top: 181px;
  left: 151px;
  width: 58px;
  height: 52px;
}

.meter {
  position: absolute;
  top: 854px;
  right: 0;
  display: flex;
  flex-direction: column;
  gap: 1px;
  width: 10px;
  height: 59px;
  padding: 6px 2px 0 3px;
  border: 1px solid #33373f;
  border-right: 0;
  border-radius: 4px 0 0 4px;
  background: #555c69;
}
.meter i {
  flex: none;
  height: 1px;
}
.ime {
  position: absolute;
  right: 0;
  bottom: 0;
  width: 145px;
  height: 26px;
  padding-left: 15px;
  border: 1px solid #b9cbe6;
  border-radius: 2px;
  background: #fff;
}
.ime span {
  position: absolute;
  top: 4px;
  left: 27px;
  color: #0a6fd8;
  font-size: 15px;
  font-weight: bold;
}
.brand {
  position: absolute;
  right: 11px;
  bottom: 0;
  display: flex;
  align-items: flex-start;
}
.brand div {
  display: flex;
  flex-direction: column;
  margin: 2px 0 0 -4px;
}
.brand strong {
  color: #4a90d9;
  font-size: 21px;
  line-height: 24px;
  opacity: 0.85;
}
.brand b {
  color: #4fbf6b;
  font: 17px/20px "Liberation Sans", sans-serif;
  opacity: 0.75;
}
</style>
